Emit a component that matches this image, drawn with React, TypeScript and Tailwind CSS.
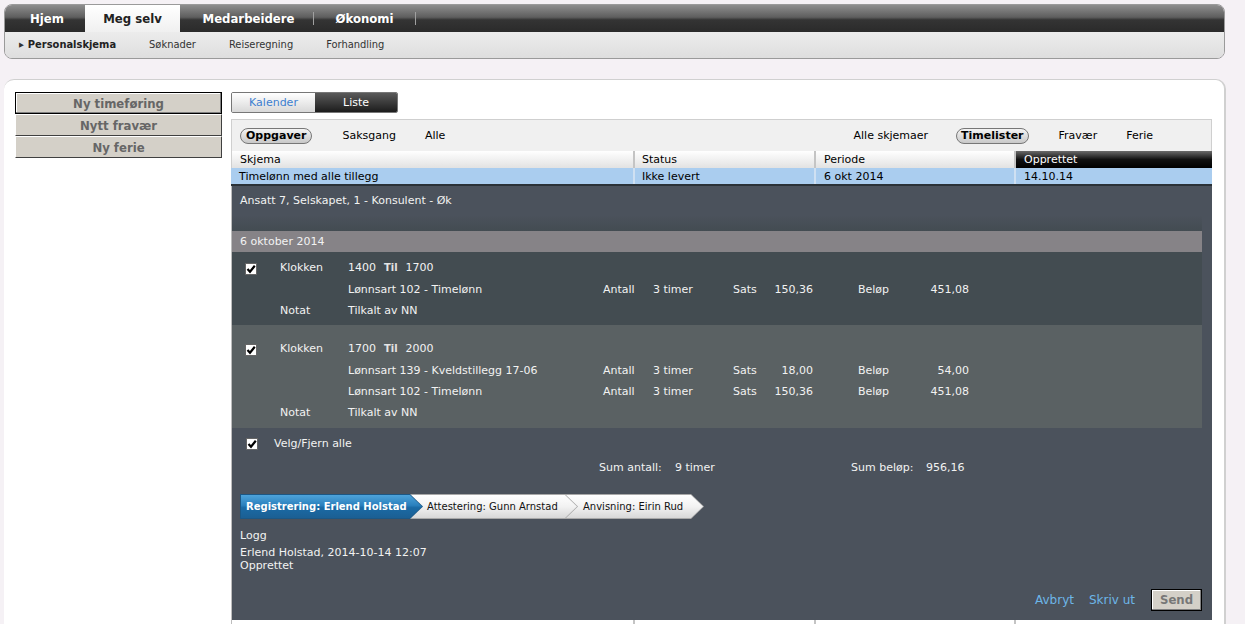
import React from "react";

const F = "font-['DejaVu_Sans','Liberation_Sans',sans-serif]";
const FC = "font-['DejaVu_Sans_Condensed','DejaVu_Sans','Liberation_Sans',sans-serif]";

function Check() {
  return (
    <span className="inline-flex w-[12px] h-[12px] bg-white border border-[#666] items-center justify-center">
      <svg width="10" height="10" viewBox="0 0 10 10">
        <path d="M1.5 5 L4 7.8 L8.8 1.8" fill="none" stroke="#000" strokeWidth="2.2" />
      </svg>
    </span>
  );
}

type Line = {
  label?: string;
  value: React.ReactNode;
  antall?: string;
  sats?: string;
  belop?: string;
  check?: boolean;
  h: string;
};

function EntryRow({ l }: { l: Line }) {
  return (
    <div className={`flex items-center ${l.h}`}>
      <span className="w-[13px]" />
      <span className="w-[35px] flex items-center">{l.check ? <Check /> : null}</span>
      <span className="w-[68px]">{l.label}</span>
      <span className="w-[255px]">{l.value}</span>
      {l.antall ? (
        <>
          <span className="w-[50px]">Antall</span>
          <span className="w-[80px]">{l.antall}</span>
          <span className="w-[40px]">Sats</span>
          <span className="w-[40px] text-right">{l.sats}</span>
          <span className="w-[45px]" />
          <span className="w-[61px]">Beløp</span>
          <span className="w-[50px] text-right">{l.belop}</span>
        </>
      ) : null}
    </div>
  );
}

function Time({ a, b }: { a: string; b: string }) {
  return (
    <span className="flex items-center">
      <span>{a}</span>
      <span className={`${FC} ml-[8px] text-[11px] font-bold text-[#e4e4e4]`}>Til</span>
      <span className="ml-[8px]">{b}</span>
    </span>
  );
}

export default function App() {
  return (
    <div className={`${F} min-h-screen w-[1245px] bg-[#f5f1f5] pt-[4px] text-[11px] text-black overflow-hidden`}>
      {/* Top navigation */}
      <div className={`${FC} ml-[4px] w-[1221px] h-[55px] rounded-[8px] overflow-hidden border border-[#9a9a9a] flex flex-col`}>
        <div className="h-[27px] bg-[linear-gradient(#8e8e8e_0%,#5e5e5e_45%,#343434_55%,#2a2a2a_100%)] flex items-stretch">
          <div className="w-[80px] flex items-center justify-center text-white font-bold text-[13px] pl-[4px]">Hjem</div>
          <div className="w-[95px] bg-[linear-gradient(#ffffff,#f0f0f0)] flex items-center justify-center text-[#222] font-bold text-[13px]">Meg selv</div>
          <div className="w-[133px] flex items-center justify-center text-white font-bold text-[13px] pl-[4px]">Medarbeidere</div>
          <div className="w-[1px] my-[7px] bg-[#a0a0a0]" />
          <div className="w-[101px] flex items-center justify-center text-white font-bold text-[13px]">Økonomi</div>
          <div className="w-[1px] my-[7px] bg-[#a0a0a0]" />
        </div>
        <div className="flex-1 bg-[linear-gradient(#ececec,#dedede)] flex items-center text-[#333] text-[11px] pt-[1px]">
          <span className="ml-[14px] text-[7px] text-[#333]">▶</span>
          <span className="ml-[4px] font-bold text-[#222]">Personalskjema</span>
          <span className="ml-[33px]">Søknader</span>
          <span className="ml-[33px]">Reiseregning</span>
          <span className="ml-[33px]">Forhandling</span>
        </div>
      </div>

      {/* Content card */}
      <div className="ml-[4px] mt-[20px] w-[1222px] h-[560px] bg-white rounded-t-[10px] border-r-2 border-t border-[#d0d0d0] flex pt-[12px]">
        {/* Left buttons */}
        <div className={`${FC} ml-[11px] w-[207px] flex flex-col`}>
          <div className="h-[22px] border border-black bg-[#d4d0c8] flex items-center justify-center text-[13px] font-bold text-[#666] shadow-[inset_-1px_-1px_0_#808080,inset_1px_1px_0_#fff] pt-[1px]">Ny timeføring</div>
          <div className="h-[22px] bg-[#d4d0c8] border-t border-l border-white border-b border-r border-b-[#404040] border-r-[#404040] flex items-center justify-center text-[13px] font-bold text-[#666] pt-[1px]">Nytt fravær</div>
          <div className="h-[22px] bg-[#d4d0c8] border-t border-l border-white border-b border-r border-b-[#404040] border-r-[#404040] flex items-center justify-center text-[13px] font-bold text-[#666] pt-[1px]">Ny ferie</div>
        </div>

        {/* Right column */}
        <div className="ml-[9px] w-[981px] flex flex-col">
          {/* View tabs */}
          <div className="flex h-[21px] w-[167px] border border-[#777] rounded-[2px] overflow-hidden text-[11px]">
            <div className="w-[83px] bg-[linear-gradient(#ffffff,#d8d8d8)] flex items-center justify-center text-[#3d7fd0] pt-[1px]">Kalender</div>
            <div className="flex-1 bg-[linear-gradient(#5a5a5a,#1c1c1c)] flex items-center justify-center text-white pt-[1px]">Liste</div>
          </div>

          {/* Filter bar */}
          <div className="mt-[6px] h-[32px] bg-[#f0f0f0] border-t border-l border-r border-[#cfcfcf] flex items-center text-[11px] pt-[1px]">
            <span className="ml-[8px] h-[16px] px-[5px] rounded-full border border-[#777] bg-[linear-gradient(#f4f4f4,#c8c8c8)] font-bold flex items-center">Oppgaver</span>
            <span className="ml-[30px]">Saksgang</span>
            <span className="ml-[29px]">Alle</span>
            <span className="ml-auto">Alle skjemaer</span>
            <span className="ml-[28px] h-[16px] px-[4px] rounded-full border border-[#777] bg-[linear-gradient(#f4f4f4,#c8c8c8)] font-bold flex items-center">Timelister</span>
            <span className="ml-[30px]">Fravær</span>
            <span className="ml-[29px] mr-[58px]">Ferie</span>
          </div>

          {/* Table header */}
          <div className="flex h-[17px] border-l border-[#cfcfcf] text-[11px]">
            <div className="w-[403px] bg-[linear-gradient(#ffffff,#e2e2e2)] border-r-2 border-[#c4c4c4] flex items-center pl-[8px] pt-[2px]">Skjema</div>
            <div className="w-[181px] bg-[linear-gradient(#ffffff,#e2e2e2)] border-r-2 border-[#c4c4c4] flex items-center pl-[7px] pt-[2px]">Status</div>
            <div className="w-[200px] bg-[linear-gradient(#ffffff,#e2e2e2)] border-r-2 border-[#c4c4c4] flex items-center pl-[8px] pt-[2px]">Periode</div>
            <div className="flex-1 bg-[linear-gradient(#6a6a6a_0%,#111_50%,#000_100%)] text-white flex items-center pl-[8px] pt-[2px]">Opprettet</div>
          </div>
          <div className="flex h-[18px] bg-[#aacdef] border-b-2 border-[#2b3238] text-[11px]">
            <div className="w-[404px] border-r-2 border-[#cfe0f2] flex items-center pl-[8px] pt-[2px]">Timelønn med alle tillegg</div>
            <div className="w-[181px] border-r-2 border-[#cfe0f2] flex items-center pl-[7px] pt-[2px]">Ikke levert</div>
            <div className="w-[200px] border-r-2 border-[#cfe0f2] flex items-center pl-[8px] pt-[2px]">6 okt 2014</div>
            <div className="flex-1 flex items-center pl-[8px] pt-[2px]">14.10.14</div>
          </div>

          {/* Detail panel */}
          <div className="h-[434px] bg-[#4b525c] text-[#f2f2f2] text-[11px] flex flex-col border-l border-[#bdbdbd]">
            <div className="h-[29px] flex items-center pl-[8px] pt-[1px]">Ansatt 7, Selskapet, 1 - Konsulent - Øk</div>
            <div className="mr-[10px] flex flex-col">
              <div className="h-[16px] bg-[linear-gradient(#4b525c,#434c52)]" />
              <div className="h-[21px] bg-[#868387] flex items-center pl-[8px] pt-[1px]">6 oktober 2014</div>
              <div className="bg-[#434c51] pt-[5px] pb-[3px]">
                <EntryRow l={{ check: true, label: "Klokken", value: <Time a="1400" b="1700" />, h: "h-[23px]" }} />
                <EntryRow l={{ value: "Lønnsart 102 - Timelønn", antall: "3 timer", sats: "150,36", belop: "451,08", h: "h-[21px]" }} />
                <EntryRow l={{ label: "Notat", value: "Tilkalt av NN", h: "h-[21px]" }} />
              </div>
              <div className="bg-[#5a6163] pt-[13px] pb-[4px]">
                <EntryRow l={{ check: true, label: "Klokken", value: <Time a="1700" b="2000" />, h: "h-[23px]" }} />
                <EntryRow l={{ value: "Lønnsart 139 - Kveldstillegg 17-06", antall: "3 timer", sats: "18,00", belop: "54,00", h: "h-[21px]" }} />
                <EntryRow l={{ value: "Lønnsart 102 - Timelønn", antall: "3 timer", sats: "150,36", belop: "451,08", h: "h-[21px]" }} />
                <EntryRow l={{ label: "Notat", value: "Tilkalt av NN", h: "h-[21px]" }} />
              </div>
            </div>
            <div className="mt-[5px] h-[22px] flex items-center">
              <span className="w-[14px]" />
              <Check />
              <span className="ml-[16px]">Velg/Fjern alle</span>
            </div>
            <div className="mt-[2px] h-[22px] flex items-center">
              <span className="w-[367px]" />
              <span className="w-[76px]">Sum antall:</span>
              <span className="w-[176px]">9 timer</span>
              <span className="w-[75px]">Sum beløp:</span>
              <span>956,16</span>
            </div>

            {/* Workflow chevrons */}
            <div className="mt-[15px] ml-[8px] flex h-[25px] text-[10px]">
              <div className="relative z-30 w-[183px] h-[25px] bg-[#1c5784] [clip-path:polygon(0_0,170px_0,183px_50%,170px_100%,0_100%)]">
                <div className="absolute inset-[1px] bg-[linear-gradient(#4ea3da_0%,#2a80bd_45%,#1a6aa5_55%,#1b5f93_100%)] [clip-path:polygon(0_0,169px_0,181px_50%,169px_100%,0_100%)] flex items-center pl-[5px] font-bold text-white">Registrering: Erlend Holstad</div>
              </div>
              <div className="relative z-20 -ml-[13px] w-[168px] h-[25px] bg-[#a8a8a8] [clip-path:polygon(0_0,155px_0,168px_50%,155px_100%,0_100%)]">
                <div className="absolute inset-[1px] bg-[linear-gradient(#ffffff_0%,#f2f2f2_50%,#d8d8d8_100%)] [clip-path:polygon(0_0,154px_0,166px_50%,154px_100%,0_100%)] flex items-center pl-[16px] text-[#111]">Attestering: Gunn Arnstad</div>
              </div>
              <div className="relative z-10 -ml-[13px] w-[139px] h-[25px] bg-[#a8a8a8] [clip-path:polygon(0_0,126px_0,139px_50%,126px_100%,0_100%)]">
                <div className="absolute inset-[1px] bg-[linear-gradient(#ffffff_0%,#f2f2f2_50%,#d8d8d8_100%)] [clip-path:polygon(0_0,125px_0,137px_50%,125px_100%,0_100%)] flex items-center pl-[17px] text-[#111]">Anvisning: Eirin Rud</div>
              </div>
            </div>

            <div className="mt-[10px] ml-[8px] leading-[13px]">Logg</div>
            <div className="mt-[4px] ml-[8px] leading-[13px]">Erlend Holstad, 2014-10-14 12:07</div>
            <div className="ml-[8px] leading-[13px]">Opprettet</div>

            <div className="mt-[17px] flex items-center justify-end pr-[10px]">
              <span className="text-[12px] text-[#6db6e8]">Avbryt</span>
              <span className="ml-[15px] text-[12px] text-[#6db6e8]">Skriv ut</span>
              <span className={`${FC} ml-[16px] w-[51px] h-[22px] border border-black bg-[#d4d0c8] shadow-[inset_-1px_-1px_0_#808080,inset_1px_1px_0_#fff] flex items-center justify-center text-[13px] font-bold text-[#777]`}>Send</span>
            </div>
          </div>
          <div className="flex h-[17px] border-l border-[#bdbdbd]">
            <div className="w-[403px] border-r-2 border-[#c4c4c4]" />
            <div className="w-[181px] border-r-2 border-[#c4c4c4]" />
            <div className="w-[200px] border-r-2 border-[#c4c4c4]" />
          </div>
        </div>
      </div>
    </div>
  );
}
